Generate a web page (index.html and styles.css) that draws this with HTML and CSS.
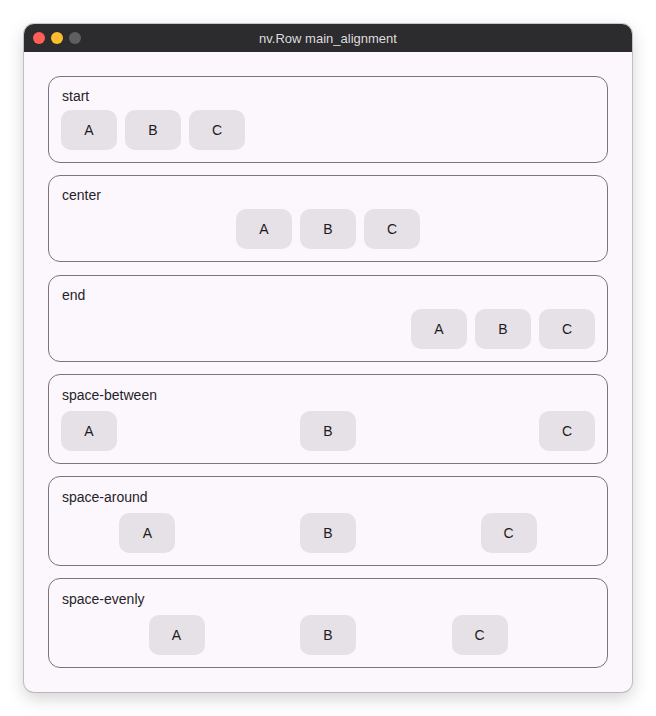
FILE: index.html
```html
<!DOCTYPE html>
<html lang="en">
<head>
  <meta charset="UTF-8" />
  <meta name="viewport" content="width=device-width, initial-scale=1.0" />
  <title>nv.Row main_alignment</title>
  <link rel="stylesheet" href="styles.css">
</head>
<body>
  <div class="window">
    <div class="titlebar">
      <div class="lights">
        <span class="light close"></span>
        <span class="light min"></span>
        <span class="light max"></span>
      </div>
      <div class="title">nv.Row main_alignment</div>
    </div>

    <div class="content">
      <div class="case">
        <div class="label">start</div>
        <div class="row start">
          <div class="chip">A</div><div class="chip">B</div><div class="chip">C</div>
        </div>
      </div>

      <div class="case">
        <div class="label">center</div>
        <div class="row center">
          <div class="chip">A</div><div class="chip">B</div><div class="chip">C</div>
        </div>
      </div>

      <div class="case">
        <div class="label">end</div>
        <div class="row end">
          <div class="chip">A</div><div class="chip">B</div><div class="chip">C</div>
        </div>
      </div>

      <div class="case">
        <div class="label descends">space-between</div>
        <div class="row between">
          <div class="chip">A</div><div class="chip">B</div><div class="chip">C</div>
        </div>
      </div>

      <div class="case">
        <div class="label descends">space-around</div>
        <div class="row around">
          <div class="chip">A</div><div class="chip">B</div><div class="chip">C</div>
        </div>
      </div>

      <div class="case">
        <div class="label descends">space-evenly</div>
        <div class="row evenly">
          <div class="chip">A</div><div class="chip">B</div><div class="chip">C</div>
        </div>
      </div>
    </div>
  </div>
</body>
</html>
```

FILE: styles.css
```css
body {
  margin: 0;
  padding: 24px;
  background: #fff;
  font-family: "Liberation Sans", Arial, sans-serif;
  color: #1d1b20;
}

.window {
  width: 608px;
  background: #fcf7fc;
  border-radius: 10px;
  overflow: hidden;
  box-shadow: 0 0 0 1px rgba(0, 0, 0, 0.18), 0 6px 18px rgba(0, 0, 0, 0.18);
}

.titlebar {
  height: 28px;
  background: #2c2b2e;
  display: flex;
  align-items: center;
  position: relative;
}
.lights {
  display: flex;
  gap: 6px;
  padding-left: 9px;
}
.light {
  width: 12px;
  height: 12px;
  border-radius: 50%;
}
.close { background: #ff5f57; }
.min { background: #febc2e; }
.max { background: #5f5e62; }
.title {
  position: absolute;
  left: 0;
  right: 0;
  text-align: center;
  font-size: 13px;
  color: #dddcde;
}

.content {
  padding: 24px;
  display: flex;
  flex-direction: column;
  gap: 12.25px;
}

.case {
  border: 1px solid #79747e;
  border-radius: 12px;
  padding: 11px 12px 12px 12px;
}
.label {
  font-size: 14px;
  line-height: 16px;
  margin-bottom: 6px;
  padding-left: 1px;
  color: #25232a;
}
.label.descends {
  line-height: 19px;
}

.row {
  display: flex;
  gap: 8px;
}
.row.start { justify-content: flex-start; }
.row.center { justify-content: center; }
.row.end { justify-content: flex-end; }
.row.between { justify-content: space-between; }
.row.around { justify-content: space-around; }
.row.evenly { justify-content: space-evenly; }

.chip {
  width: 56px;
  height: 40px;
  border-radius: 10px;
  background: #e6e1e6;
  display: flex;
  align-items: center;
  justify-content: center;
  font-size: 14px;
}
```
